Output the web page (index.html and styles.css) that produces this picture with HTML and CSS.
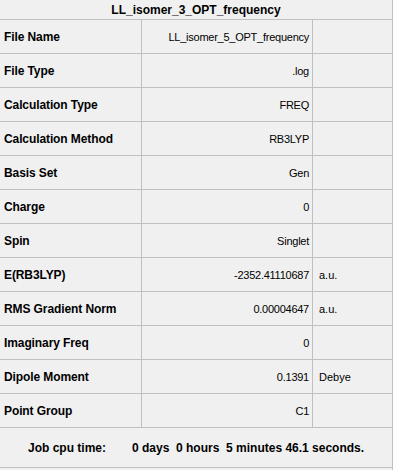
FILE: index.html
```html
<!DOCTYPE html>
<html>
<head>
<meta charset="utf-8">
<link rel="stylesheet" href="styles.css">
</head>
<body>
<div class="panel">
  <div class="title">LL_isomer_3_OPT_frequency</div>
  <div class="grid">
    <div class="lab">File Name</div><div class="val">LL_isomer_5_OPT_frequency</div><div class="unit"></div>
    <div class="lab">File Type</div><div class="val">.log</div><div class="unit"></div>
    <div class="lab">Calculation Type</div><div class="val">FREQ</div><div class="unit"></div>
    <div class="lab">Calculation Method</div><div class="val">RB3LYP</div><div class="unit"></div>
    <div class="lab">Basis Set</div><div class="val">Gen</div><div class="unit"></div>
    <div class="lab">Charge</div><div class="val">0</div><div class="unit"></div>
    <div class="lab">Spin</div><div class="val">Singlet</div><div class="unit"></div>
    <div class="lab">E(RB3LYP)</div><div class="val">-2352.41110687</div><div class="unit">a.u.</div>
    <div class="lab">RMS Gradient Norm</div><div class="val">0.00004647</div><div class="unit">a.u.</div>
    <div class="lab">Imaginary Freq</div><div class="val">0</div><div class="unit"></div>
    <div class="lab">Dipole Moment</div><div class="val">0.1391</div><div class="unit">Debye</div>
    <div class="lab">Point Group</div><div class="val">C1</div><div class="unit"></div>
  </div>
  <div class="footer">
    <span class="f1">Job cpu time:</span>
    <span class="f2">0 days&nbsp;&nbsp;0 hours&nbsp;&nbsp;5 minutes 46.1 seconds.</span>
  </div>
</div>
</body>
</html>
```
FILE: styles.css
```css
html, body {
  margin: 0;
  padding: 0;
  background: #f0f0f0;
}
.panel {
  width: 392px;
  height: 470px;
  border-right: 1px solid #c0c0c0;
  font-family: "Liberation Sans", Arial, sans-serif;
  font-size: 12px;
  color: #000;
  background: #f0f0f0;
}
.title {
  height: 19px;
  border-bottom: 1px solid #c0c0c0;
  display: flex;
  align-items: center;
  justify-content: center;
  font-weight: bold;
}
.grid {
  display: grid;
  grid-template-columns: 142px 171px 79px;
  grid-auto-rows: 34px;
}
.grid > div {
  border-bottom: 1px solid #c0c0c0;
  display: flex;
  align-items: center;
  white-space: nowrap;
}
.lab {
  font-weight: bold;
  padding-left: 4px;
  letter-spacing: -0.1px;
  border-right: 1px solid #c0c0c0;
}
.val {
  justify-content: flex-end;
  padding-right: 3px;
  font-size: 11px;
  letter-spacing: -0.25px;
  border-right: 1px solid #c0c0c0;
}
.unit {
  padding-left: 6px;
  font-size: 11px;
}
.footer {
  height: 39px;
  border-bottom: 1px solid #c0c0c0;
  display: flex;
  align-items: center;
  font-weight: bold;
  white-space: pre;
}
.f1 {
  padding-left: 28px;
  width: 104px;
}
```
